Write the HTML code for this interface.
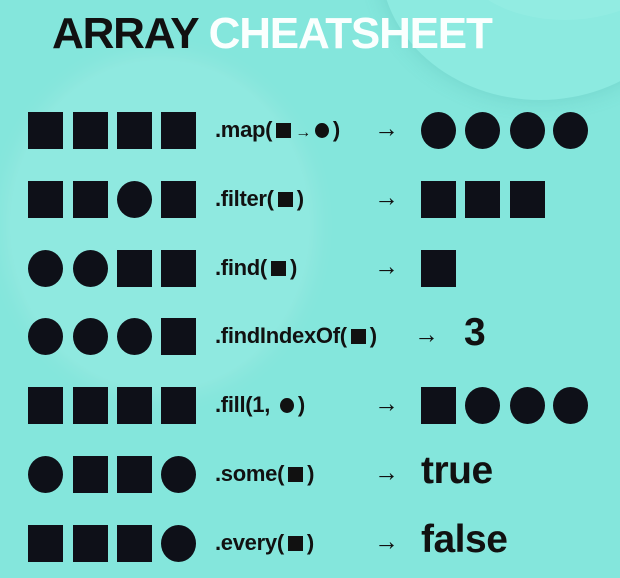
<!DOCTYPE html><html><head><style>
body{margin:0;width:620px;height:578px;overflow:hidden;background:#84e6dc;font-family:"Liberation Sans",sans-serif;position:relative}
.bg1{position:absolute;left:10px;top:60px;width:300px;height:330px;border-radius:50%;background:#8fe9e0;box-shadow:0 0 30px rgba(255,255,255,.2)}
.bg2{position:absolute;left:380px;top:-180px;width:320px;height:280px;border-radius:50%;background:#8ceae0;box-shadow:0 0 20px rgba(60,160,150,.25)}
.bg3{position:absolute;left:455px;top:-120px;width:220px;height:140px;border-radius:50%;background:#92ece2}
h1{position:absolute;left:52px;top:9px;margin:0;font-size:44px;font-weight:bold;letter-spacing:-1.2px;color:#111;white-space:nowrap}
h1 span{color:#fafffe}
.row{position:absolute;left:0;height:36px;width:620px}
.s,.c{position:absolute;top:-1px;width:35px;height:37px;background:#0e1018}
.c{border-radius:50%}
.m{position:absolute;left:215px;top:4px;font-size:22px;font-weight:bold;color:#111;letter-spacing:-.3px;white-space:nowrap}
.m i{display:inline-block;width:15px;height:15px;background:#111;vertical-align:-1px;margin:0 4px}
.m b{display:inline-block;width:14px;height:15px;background:#111;border-radius:50%;vertical-align:-1px;margin:0 4px}
.a{position:absolute;left:373px;top:0px;font-size:27px;color:#111;transform:scaleX(.9)}
.r{position:absolute;left:421px;top:-8px;font-size:39px;font-weight:bold;color:#111;letter-spacing:-.5px}
</style></head><body>
<div class="bg1"></div><div class="bg2"></div><div class="bg3"></div>
<h1>ARRAY <span>CHEATSHEET</span></h1>

<div class="row" style="top:113px">
<div class="s" style="left:28px"></div><div class="s" style="left:73px"></div><div class="s" style="left:117px"></div><div class="s" style="left:161px"></div>
<div class="m">.map(<i></i><span style="font-weight:normal;font-size:16px">→</span><b></b>)</div><div class="a">→</div>
<div class="c" style="left:421px"></div><div class="c" style="left:465px"></div><div class="c" style="left:510px"></div><div class="c" style="left:553px"></div>
</div>

<div class="row" style="top:182px">
<div class="s" style="left:28px"></div><div class="s" style="left:73px"></div><div class="c" style="left:117px"></div><div class="s" style="left:161px"></div>
<div class="m">.filter(<i></i>)</div><div class="a">→</div>
<div class="s" style="left:421px"></div><div class="s" style="left:465px"></div><div class="s" style="left:510px"></div>
</div>

<div class="row" style="top:251px">
<div class="c" style="left:28px"></div><div class="c" style="left:73px"></div><div class="s" style="left:117px"></div><div class="s" style="left:161px"></div>
<div class="m">.find(<i></i>)</div><div class="a">→</div>
<div class="s" style="left:421px"></div>
</div>

<div class="row" style="top:319px">
<div class="c" style="left:28px"></div><div class="c" style="left:73px"></div><div class="c" style="left:117px"></div><div class="s" style="left:161px"></div>
<div class="m">.findIndexOf(<i></i>)</div><div class="a" style="left:413px">→</div>
<div class="r" style="left:464px">3</div>
</div>

<div class="row" style="top:388px">
<div class="s" style="left:28px"></div><div class="s" style="left:73px"></div><div class="s" style="left:117px"></div><div class="s" style="left:161px"></div>
<div class="m">.fill(1, <b></b>)</div><div class="a">→</div>
<div class="s" style="left:421px"></div><div class="c" style="left:465px"></div><div class="c" style="left:510px"></div><div class="c" style="left:553px"></div>
</div>

<div class="row" style="top:457px">
<div class="c" style="left:28px"></div><div class="s" style="left:73px"></div><div class="s" style="left:117px"></div><div class="c" style="left:161px"></div>
<div class="m">.some(<i></i>)</div><div class="a">→</div>
<div class="r">true</div>
</div>

<div class="row" style="top:526px">
<div class="s" style="left:28px"></div><div class="s" style="left:73px"></div><div class="s" style="left:117px"></div><div class="c" style="left:161px"></div>
<div class="m">.every(<i></i>)</div><div class="a">→</div>
<div class="r">false</div>
</div>
</body></html>
